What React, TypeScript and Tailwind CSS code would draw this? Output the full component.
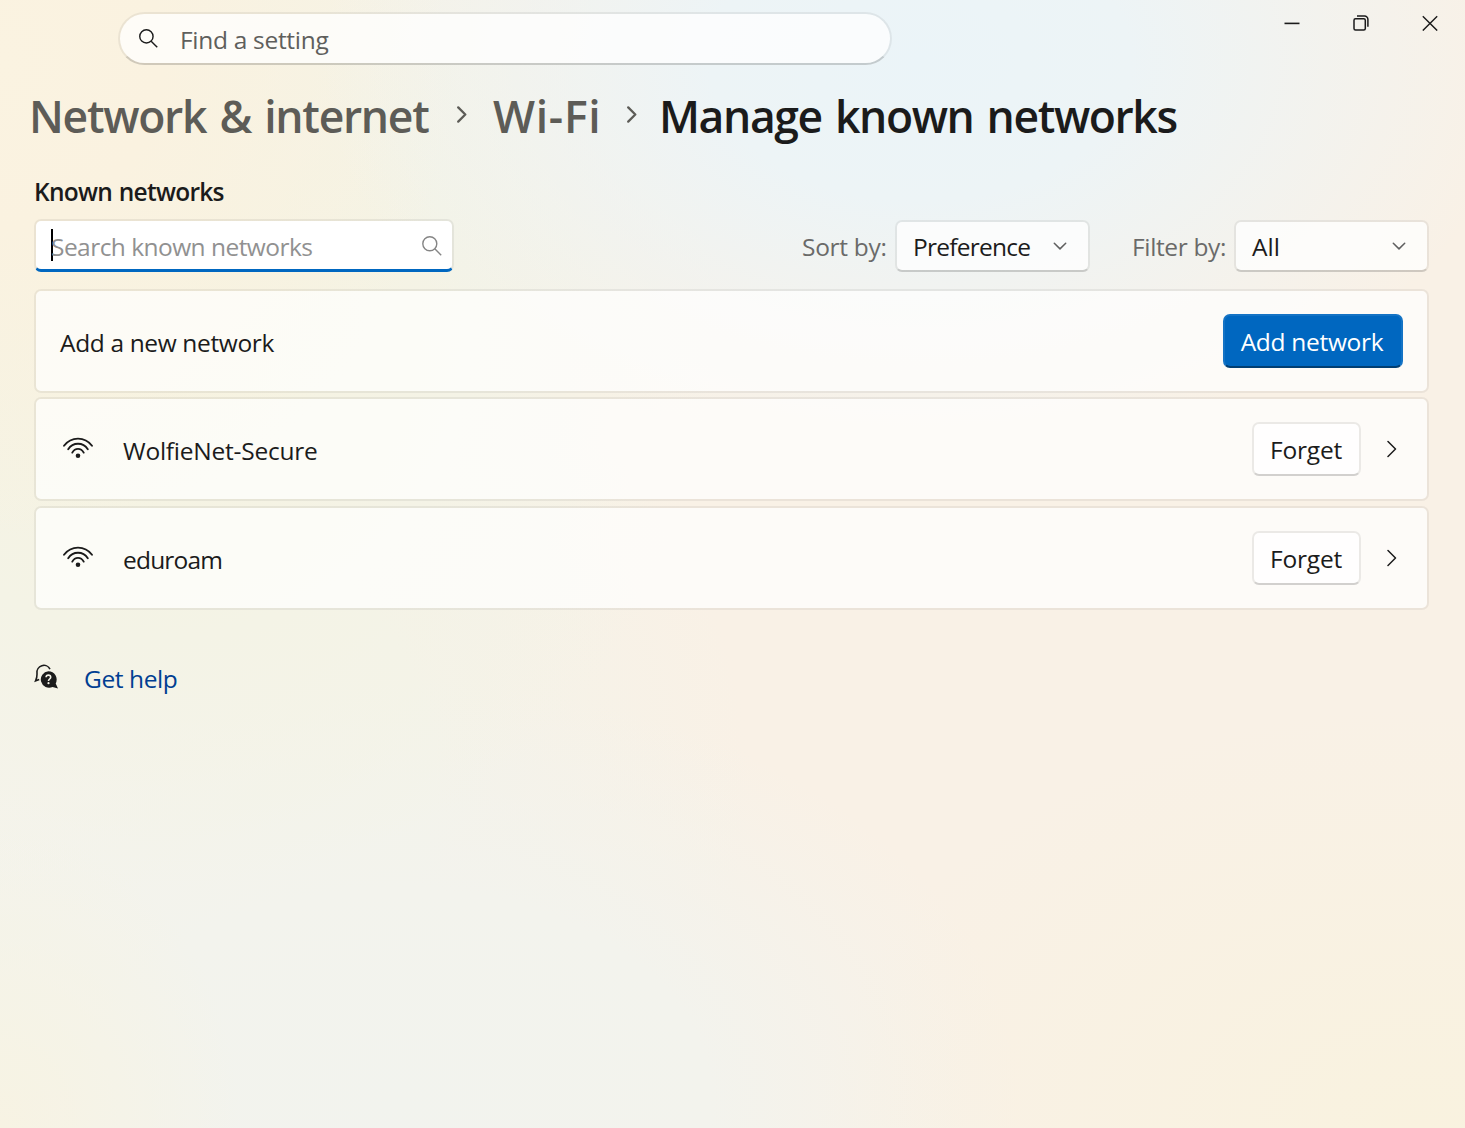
import type { ReactNode } from "react";

function SearchIcon({ className }: { className: string }) {
  return (
    <svg viewBox="0 0 20 20" className={className} fill="none" stroke="currentColor">
      <circle cx="7.8" cy="7.8" r="7" />
      <path d="M12.8 12.8 19.2 19.2" />
    </svg>
  );
}

function ChevronRight({ className }: { className: string }) {
  return (
    <svg viewBox="0 0 10 18" className={className} fill="none" stroke="currentColor">
      <path d="M1 1.5 8.5 9 1 16.5" strokeLinecap="round" strokeLinejoin="round" />
    </svg>
  );
}

function ChevronDown() {
  return (
    <svg viewBox="0 0 14 9" className="h-[9px] w-[14px] text-[#5f5f5f]" fill="none" stroke="currentColor" strokeWidth="1.5">
      <path d="M1.3 1.3 7 6.9 12.7 1.3" strokeLinecap="round" strokeLinejoin="round" />
    </svg>
  );
}

function WifiIcon() {
  return (
    <svg viewBox="0 0 32 24" className="mt-[-3px] h-6 w-8" fill="none" stroke="#1b1b1b" strokeWidth="1.9" strokeLinecap="round">
      <path d="M2 9.7C9.2.2 22.8.2 30 9.7" />
      <path d="M6.2 13.2C11 6 21 6 25.8 13.2" />
      <path d="M10.3 16.6C13 11.6 19 11.6 21.7 16.6" />
      <circle cx="16" cy="19.8" r="2.3" fill="#1b1b1b" stroke="none" />
    </svg>
  );
}

function HelpIcon() {
  return (
    <svg viewBox="0 0 26 26" className="mt-[-5px] h-[26px] w-[26px]" fill="none">
      <path d="M16 5.2A6.9 6.9 0 0 0 3 9.2c0 2.6.3 3.6-1.4 7.6l3.6-1.4" stroke="#1b1b1b" strokeWidth="1.6" />
      <path d="M14.4 7.2a8.3 8.3 0 0 1 7.3 12.2l2.3 5.2-5.4-1.6A8.3 8.3 0 1 1 14.4 7.2Z" fill="#1b1b1b" />
      <path d="M12.1 13.3c0-3 4.6-2.9 4.6-.1 0 1.8-2.2 1.8-2.2 3.7" stroke="#f4f3e8" strokeWidth="1.6" />
      <circle cx="14.5" cy="19.2" r="1.1" fill="#f4f3e8" />
    </svg>
  );
}

function WindowControls() {
  return (
    <div className="flex h-[46px] items-center pr-px text-[#1b1b1b]">
      <button className="flex h-12 w-[69px] items-center justify-center" aria-label="Minimize">
        <svg viewBox="0 0 16 16" className="size-4" fill="none" stroke="currentColor" strokeWidth="1.6">
          <path d="M.5 8.4h15" />
        </svg>
      </button>
      <button className="flex h-12 w-[69px] items-center justify-center" aria-label="Restore">
        <svg viewBox="0 0 16 16" className="size-4" fill="none" stroke="currentColor" strokeWidth="1.5">
          <rect x="1" y="3.7" width="11.3" height="11.3" rx="1.5" />
          <path d="M4 1h7.5A3.3 3.3 0 0 1 14.9 4.3v7.4" />
        </svg>
      </button>
      <button className="flex h-12 w-[69px] items-center justify-center" aria-label="Close">
        <svg viewBox="0 0 16 16" className="size-4" fill="none" stroke="currentColor" strokeWidth="1.4">
          <path d="M.8 1.2 15.2 15.6M15.2 1.2.8 15.6" />
        </svg>
      </button>
    </div>
  );
}

function Select({ children }: { children: ReactNode }) {
  return (
    <button className="flex h-[52px] w-[195px] items-center justify-between rounded-[7px] border-2 border-black/[0.06] border-b-black/[0.17] bg-white/75 bg-clip-padding pr-[21px] pl-4 text-[#1b1b1b]">
      {children}
      <ChevronDown />
    </button>
  );
}

function Card({ children }: { children: ReactNode }) {
  return (
    <div className="flex h-[104px] items-center justify-between rounded-[7px] border-2 border-black/[0.055] bg-white/70 bg-clip-padding pr-6 pl-6 text-[#1b1b1b]">
      {children}
    </div>
  );
}

function NetworkRow({ children }: { children: ReactNode }) {
  return (
    <Card>
      <div className="flex items-center gap-[29px] pl-[2px]">
        <WifiIcon />
        {children}
      </div>
      <div className="flex items-center gap-[26px] pr-[6px]">
        <button className="flex h-[54px] w-[109px] items-center justify-center rounded-[7px] border-2 border-black/[0.07] border-b-black/[0.17] bg-white/80 bg-clip-padding">
          <span className="pt-[2px] pr-px tracking-[-0.2px]">Forget</span>
        </button>
        <ChevronRight className="h-[18px] w-[10px] stroke-[1.5]" />
      </div>
    </Card>
  );
}

export default function App() {
  return (
    <div className="h-[1128px] w-[1465px] overflow-hidden bg-[#f9f1e6] bg-[radial-gradient(ellipse_600px_400px_at_920px_60px,#ebf4f8_0%,#edf4f6_35%,#edf4f600_100%),radial-gradient(ellipse_460px_480px_at_0px_60px,#faf3e1_0%,#faf2e0_35%,#faf2e000_100%),radial-gradient(ellipse_560px_560px_at_160px_330px,#f6f3e0_0%,#f4f3e6_55%,#f4f3e600_100%),radial-gradient(ellipse_600px_420px_at_1420px_1128px,#f9f2df_0%,#f9f2df00_100%),radial-gradient(ellipse_240px_300px_at_0px_1128px,#f7f3e3_0%,#f7f3e300_100%),radial-gradient(ellipse_620px_420px_at_400px_1100px,#f2f3ee_0%,#f3f3ed_50%,#f3f3ed00_100%),radial-gradient(ellipse_700px_560px_at_50px_780px,#f5f3ec_0%,#f4f3e9_55%,#f4f3e900_100%)] font-['Open_Sans','Noto_Sans',sans-serif] text-[24.5px] leading-8">
      <header className="flex h-[72px] justify-between pl-[118px]">
        <div className="mt-3 flex h-[53px] w-[774px] items-center gap-[22px] rounded-full border-2 border-black/[0.06] border-b-black/[0.17] bg-white/75 bg-clip-padding pl-[19px] text-[#5f5f5c]">
          <SearchIcon className="size-[19px] stroke-[1.5] text-[#1b1b1b]" />
          <span className="pt-[2px] tracking-[-0.3px]">Find a setting</span>
        </div>
        <WindowControls />
      </header>

      <h1 className="flex h-[88px] items-center pl-[29px] text-[44.5px] leading-[88px] font-semibold whitespace-nowrap text-[#5d5c57]">
        <span className="w-[399px] tracking-[-1.3px] [word-spacing:3px]">Network &amp; internet</span>
        <ChevronRight className="mt-[-3px] ml-[29px] h-[17px] w-[10px] stroke-[2.4]" />
        <span className="ml-[26px] w-[107px] tracking-[0.7px]">Wi-Fi</span>
        <ChevronRight className="mt-[-3px] ml-[27px] h-[17px] w-[10px] stroke-[2.4]" />
        <span className="ml-[22px] tracking-[-1.4px] text-[#1b1b1b] [word-spacing:3px]">Manage known networks</span>
      </h1>

      <main className="pr-9 pl-[34px]">
        <h2 className="mt-4 flex h-8 items-center font-semibold text-[#1b1b1b]">
          <span className="tracking-[-0.72px] [word-spacing:1px]">Known networks</span>
        </h2>
        <div className="mt-[11px] flex h-[53px] items-start justify-between whitespace-nowrap text-[#6a6a69]">
          <div className="flex h-[53px] w-[420px] items-center justify-between overflow-hidden rounded-[7px] border-2 border-b-[3px] border-black/[0.06] border-b-[#0067c0] bg-white bg-clip-padding pr-[10px] pl-[15px] text-[#919191]">
            <div className="flex items-start">
              <span className="mr-[-2px] h-8 w-[2px] bg-black" />
              <span className="mt-[2px] -mb-[2px] tracking-[-0.54px]">Search known networks</span>
            </div>
            <SearchIcon className="mt-[2px] size-5 stroke-[1.4] text-[#858585]" />
          </div>
          <div className="mt-px flex items-center">
            <span className="w-[93px] pt-[2px] tracking-[-0.3px]">Sort by:</span>
            <Select><span className="pt-[2px] tracking-[-0.75px]">Preference</span></Select>
            <span className="ml-[42px] w-[102px] pt-[2px] tracking-[-0.35px]">Filter by:</span>
            <Select><span className="pt-[2px] tracking-[0px]">All</span></Select>
          </div>
        </div>

        <section className="mt-[17px]">
          <Card>
            <span className="pt-[4px] tracking-[-0.36px]">Add a new network</span>
            <button className="flex h-[54px] w-[180px] items-center justify-center rounded-[7px] border-2 border-[#1473c5] border-b-[#003e73] bg-[#0067c0] text-white">
              <span className="pt-[2px] pr-[2px] tracking-[-0.3px]">Add network</span>
            </button>
          </Card>
          <div className="mt-1">
            <NetworkRow><span className="pt-[4px] tracking-[-0.23px]">WolfieNet-Secure</span></NetworkRow>
          </div>
          <div className="mt-[5px]">
            <NetworkRow><span className="pt-[4px] tracking-[-0.8px]">eduroam</span></NetworkRow>
          </div>
        </section>

        <footer className="mt-[53px] flex h-8 items-center gap-[24px] text-[#003e92]">
          <HelpIcon />
          <a className="tracking-[-0.4px]">Get help</a>
        </footer>
      </main>
    </div>
  );
}
